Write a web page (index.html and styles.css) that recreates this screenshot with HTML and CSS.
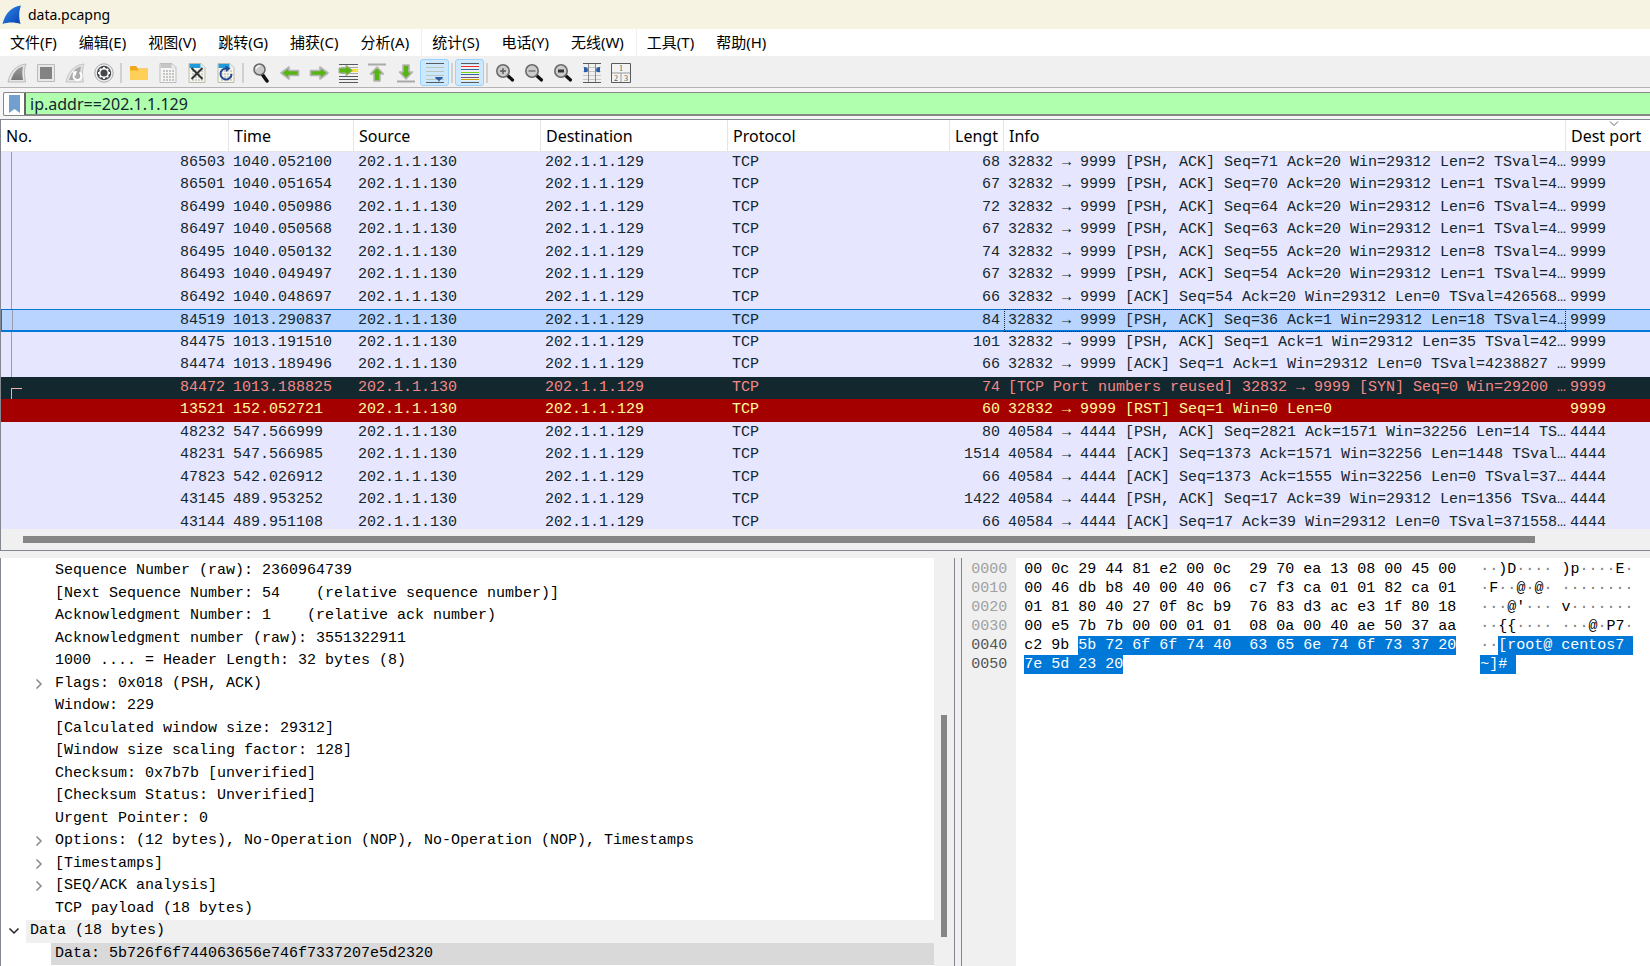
FILE: index.html
```
<!DOCTYPE html>
<html lang="zh-CN">
<head>
    <meta charset="UTF-8">
    <meta name="viewport" content="width=device-width, initial-scale=1.0">
    <title>data.pcapng</title>
    <link rel="stylesheet" href="styles.css">
</head>
<body>
    <header class="titlebar">
        <svg width="20" height="20" viewBox="0 0 20 20">
            <defs>
                <linearGradient id="fin" x1="0" y1="0" x2="1" y2="1">
                    <stop offset="0" stop-color="#2f8df0"/>
                    <stop offset="1" stop-color="#0a3fae"/>
                </linearGradient>
                <linearGradient id="grayfin" x1="0" y1="0" x2="0" y2="1">
                    <stop offset="0" stop-color="#9a9a9a"/>
                    <stop offset="1" stop-color="#777"/>
                </linearGradient>
            </defs>
            <path d="M.5 19C3 9 9 1.500 19 .5c-2 5-2.500 11-.5 18.500C13 17 6 17 .5 19z" fill="url(#fin)"/>
        </svg>
        <span>data.pcapng</span>
    </header>

    <nav class="menubar">
        <button type="button">文件(F)</button>
        <button type="button">编辑(E)</button>
        <button type="button">视图(V)</button>
        <button type="button">跳转(G)</button>
        <button type="button">捕获(C)</button>
        <button type="button">分析(A)</button>
        <button type="button" class="divided">统计(S)</button>
        <button type="button">电话(Y)</button>
        <button type="button">无线(W)</button>
        <button type="button" class="divided">工具(T)</button>
        <button type="button">帮助(H)</button>
    </nav>

    <div class="toolbar">
        <button type="button" aria-label="Start capture">
            <svg width="20" height="20" viewBox="0 0 20 20"><path d="M1 19C3 9 9 2 19 1c-2 5-2 11-.5 18z" fill="#e4e4e4" stroke="#bbb"/><path d="M4 17C6 10 10 5 16 3.500c-1 4-1 9 0 13.500z" fill="url(#grayfin)"/></svg>
        </button>
        <button type="button" aria-label="Stop capture">
            <svg width="20" height="20" viewBox="0 0 20 20"><path d="M1.500 1.500h17v17h-17z" fill="#e8e8e8" stroke="#bbb"/><path d="M4 4h12v12H4z" fill="#838383"/></svg>
        </button>
        <button type="button" aria-label="Restart capture">
            <svg width="20" height="20" viewBox="0 0 20 20"><path d="M1 19C3 9 9 2 19 1c-2 5-2 11-.5 18z" fill="#e4e4e4" stroke="#c4c4c4"/><path d="M4 17C6 10 10 5 16 3.500c-1 4-1 9 0 13.500z" fill="#aaa"/><path d="M14.500 9.500a4 4 0 1 1-5 .8" fill="none" stroke="#fff" stroke-width="2"/><path d="M7 8.500l5-.5-1.500 5z" fill="#fff"/></svg>
        </button>
        <button type="button" aria-label="Capture options">
            <svg width="20" height="20" viewBox="0 0 20 20"><circle cx="10" cy="10" r="9.200" fill="#eee" stroke="#a8a8a8"/><circle cx="10" cy="10" r="7.200" fill="#45494c"/><circle cx="10" cy="10" r="4.300" fill="none" stroke="#fff" stroke-width="1.500"/><path d="M10 4v2M10 14v2M4 10h2M14 10h2M5.800 5.800l1.400 1.400M12.800 12.800l1.400 1.400M5.800 14.200l1.400-1.400M12.800 7.200l1.400-1.400" stroke="#fff" stroke-width="1.800"/><circle cx="10" cy="10" r="2.400" fill="#45494c"/></svg>
        </button>
        <span class="sep"></span>
        <button type="button" aria-label="Open">
            <svg width="20" height="20" viewBox="0 0 20 20"><path d="M1 4q0-1 1-1h5l2 2.500h9q1 0 1 1V16q0 1-1 1H2q-1 0-1-1z" fill="#f0a91c"/><path d="M1 7.500h7.500l1.500-1.500h8.500q.5 0 .5.500V16q0 1-1 1H2q-1 0-1-1z" fill="#ffd057"/></svg>
        </button>
        <button type="button" aria-label="Save">
            <svg width="20" height="20" viewBox="0 0 20 20"><path d="M2 .5h12l4 4v15H2z" fill="#f5f5f3" stroke="#bdbdbd"/><path d="M2.500 1h11v4h-11z" fill="#c6c6c6"/><path d="M14 1v4h4z" fill="#fff" stroke="#bbb" stroke-width=".5"/><path d="M5 8h11M5 11h11M5 14h11M5 17h11" stroke="#c4c4c4" stroke-width="2" stroke-dasharray="2 1"/></svg>
        </button>
        <button type="button" aria-label="Close">
            <svg width="20" height="20" viewBox="0 0 20 20"><path d="M2 .5h12l4 4v15H2z" fill="#f5f5ec" stroke="#bcbcad"/><path d="M2.500 1h11v4h-11z" fill="#209bd8"/><path d="M14 1v4h4z" fill="#dcecf2"/><path d="M5 8h11M5 11h11M5 14h11M5 17h11" stroke="#d0d0c8" stroke-width="2" stroke-dasharray="2 1"/><path d="M4.500 5l11 11M15.500 5l-11 11" stroke="#2e3436" stroke-width="2"/></svg>
        </button>
        <button type="button" aria-label="Reload">
            <svg width="20" height="20" viewBox="0 0 20 20"><path d="M2 .5h12l4 4v15H2z" fill="#f5f5ec" stroke="#bcbcad"/><path d="M2.500 1h11v4h-11z" fill="#209bd8"/><path d="M14 1v4h4z" fill="#dcecf2"/><path d="M5 8h11M5 11h11M5 14h11M5 17h11" stroke="#d0d0c8" stroke-width="2" stroke-dasharray="2 1"/><path d="M15.500 11a5.500 5.500 0 1 1-5-5.500" fill="none" stroke="#244a94" stroke-width="2"/><path d="M9.500 2.500l5 3-4.500 3.500z" fill="#244a94"/></svg>
        </button>
        <span class="sep"></span>
        <button type="button" aria-label="Find packet">
            <svg width="20" height="20" viewBox="0 0 20 20"><path d="M11 11l5 7" stroke="#111" stroke-width="3.500" stroke-linecap="round"/><circle cx="8.500" cy="6.500" r="5.500" fill="#c9c9c9" stroke="#666" stroke-width="1.500"/><path d="M5 6q1-3 4-3" stroke="#f5f5f5" stroke-width="1.500" fill="none"/></svg>
        </button>
        <button type="button" aria-label="Previous packet">
            <svg width="20" height="20" viewBox="0 0 20 20"><path d="M1 10l8-6v3.500h9.500v5H9V16z" fill="#57b512" stroke="#b4b4b4" stroke-width="1.600" stroke-linejoin="round"/></svg>
        </button>
        <button type="button" aria-label="Next packet">
            <svg width="20" height="20" viewBox="0 0 20 20"><path d="M19 10l-8-6v3.500H1.500v5H11V16z" fill="#57b512" stroke="#b4b4b4" stroke-width="1.600" stroke-linejoin="round"/></svg>
        </button>
        <button type="button" aria-label="Go to packet">
            <svg width="20" height="20" viewBox="0 0 20 20"><path d="M1 1.500h19M1 13.500h19M1 16.500h19M1 19.500h19" stroke="#555b5e"/><path d="M3 4.500h17M3 10.500h17" stroke="#aaa"/><path d="M13 7.500h7" stroke="#fce03a" stroke-width="3"/><path d="M14.500 7.500L8 2v3H1v5h7v3z" fill="#57b512" stroke="#a8b0a0" stroke-linejoin="round"/></svg>
        </button>
        <button type="button" aria-label="First packet">
            <svg width="20" height="20" viewBox="0 0 20 20"><path d="M1 1.500h18" stroke="#aaa" stroke-width="2"/><path d="M10 4l6.500 7H13v7H7v-7H3.500z" fill="#57b512" stroke="#b4b4b4" stroke-width="1.600" stroke-linejoin="round"/></svg>
        </button>
        <button type="button" aria-label="Last packet">
            <svg width="20" height="20" viewBox="0 0 20 20"><path d="M1 18.500h18" stroke="#aaa" stroke-width="2"/><path d="M10 16L3.500 9H7V2h6v7h3.500z" fill="#57b512" stroke="#b4b4b4" stroke-width="1.600" stroke-linejoin="round"/></svg>
        </button>
        <button type="button" class="on" aria-label="Auto scroll">
            <svg width="20" height="20" viewBox="0 0 20 20"><path d="M1 .5h18M1 19.500h18" stroke="#555b5e"/><path d="M1 4.500h18M1 8.500h18M1 12.500h18M1 16.500h18" stroke="#bfc4bb"/><path d="M10 14h8q0 2-3 3l-1 2-1-2q-3-1-3-3z" fill="#2c5ea8"/></svg>
        </button>
        <span class="sep"></span>
        <button type="button" class="on" aria-label="Colorize">
            <svg width="20" height="20" viewBox="0 0 20 20"><path d="M1 2h18v16H1z" fill="#eef1f2"/><path d="M1 .5h18M1 19.500h18" stroke="#555b5e"/><path d="M1 3.500h18" stroke="#ef2929"/><path d="M1 6.500h18" stroke="#3465a4"/><path d="M1 9.500h18" stroke="#73d216"/><path d="M1 11.500h18" stroke="#3465a4"/><path d="M1 14.500h18" stroke="#75507b"/><path d="M1 16.500h18" stroke="#c4a000"/></svg>
        </button>
        <span class="sep"></span>
        <button type="button" aria-label="Zoom in">
            <svg width="20" height="20" viewBox="0 0 20 20"><path d="M12 12l5.500 5" stroke="#111" stroke-width="3.200" stroke-linecap="round"/><circle cx="8" cy="8" r="6.200" fill="#ccc" stroke="#6a6a6a" stroke-width="1.600"/><path d="M5 8h6M8 5v6" stroke="#555" stroke-width="1.300"/></svg>
        </button>
        <button type="button" aria-label="Zoom out">
            <svg width="20" height="20" viewBox="0 0 20 20"><path d="M12 12l5.500 5" stroke="#111" stroke-width="3.200" stroke-linecap="round"/><circle cx="8" cy="8" r="6.200" fill="#ccc" stroke="#6a6a6a" stroke-width="1.600"/><path d="M4.500 8h7" stroke="#666" stroke-width="1.300"/></svg>
        </button>
        <button type="button" aria-label="Normal size">
            <svg width="20" height="20" viewBox="0 0 20 20"><path d="M12 12l5.500 5" stroke="#111" stroke-width="3.200" stroke-linecap="round"/><circle cx="8" cy="8" r="6.200" fill="#ccc" stroke="#6a6a6a" stroke-width="1.600"/><path d="M5 8h6" stroke="#333" stroke-width="3"/></svg>
        </button>
        <button type="button" aria-label="Resize columns">
            <svg width="20" height="20" viewBox="0 0 20 20"><path d="M1 .5h18M1 19.500h18" stroke="#555b5e"/><path d="M1 4.500h18M1 8.500h18M1 12.500h18M1 16.500h18" stroke="#c6c9c2"/><path d="M6.500 1v18M13.500 1v18" stroke="#888"/><path d="M2 4q4 0 4 3t-4 2zM18 4q-4 0-4 3t4 2z" fill="#2c5ea8"/></svg>
        </button>
        <button type="button" aria-label="Layout">
            <svg width="20" height="20" viewBox="0 0 20 20"><path d="M.5.5h19v19H.5z" fill="#f3f3f3" stroke="#555b5e"/><path d="M1 10h18M10 10v9" stroke="#999"/><g font-family="Liberation Serif, serif" font-size="8" fill="#555" text-anchor="middle"><text x="10" y="8">1</text><text x="5" y="18">2</text><text x="15" y="18">3</text></g></svg>
        </button>
    </div>

    <div class="filterbar">
        <button type="button" class="bookmark" aria-label="Bookmarks">
            <svg width="11" height="18" viewBox="0 0 11 18"><path d="M0 0h11v18l-5.500-4L0 18z" fill="#729fcf"/></svg>
        </button>
        <input type="text" class="filter" aria-label="Display filter" value="ip.addr==202.1.1.129">
    </div>

    <section class="packets">
        <div class="packet-view">
            <table>
                <colgroup>
                    <col class="c-no">
                    <col class="c-time">
                    <col class="c-addr">
                    <col class="c-addr">
                    <col class="c-proto">
                    <col class="c-len">
                    <col>
                    <col class="c-port">
                </colgroup>
                <thead>
                    <tr><th>No.</th><th>Time</th><th>Source</th><th>Destination</th><th>Protocol</th><th>Lengt</th><th>Info</th><th class="sorted">Dest port<svg width="10" height="6" viewBox="0 0 10 6"><path d="M1 .5l4 4 4-4" fill="none" stroke="#666"/></svg></th></tr>
                </thead>
                <tbody>
                    <tr class="conv"><td>86503</td><td>1040.052100</td><td>202.1.1.130</td><td>202.1.1.129</td><td>TCP</td><td>68</td><td>32832 → 9999 [PSH, ACK] Seq=71 Ack=20 Win=29312 Len=2 TSval=4…</td><td>9999</td></tr>
                    <tr class="conv"><td>86501</td><td>1040.051654</td><td>202.1.1.130</td><td>202.1.1.129</td><td>TCP</td><td>67</td><td>32832 → 9999 [PSH, ACK] Seq=70 Ack=20 Win=29312 Len=1 TSval=4…</td><td>9999</td></tr>
                    <tr class="conv"><td>86499</td><td>1040.050986</td><td>202.1.1.130</td><td>202.1.1.129</td><td>TCP</td><td>72</td><td>32832 → 9999 [PSH, ACK] Seq=64 Ack=20 Win=29312 Len=6 TSval=4…</td><td>9999</td></tr>
                    <tr class="conv"><td>86497</td><td>1040.050568</td><td>202.1.1.130</td><td>202.1.1.129</td><td>TCP</td><td>67</td><td>32832 → 9999 [PSH, ACK] Seq=63 Ack=20 Win=29312 Len=1 TSval=4…</td><td>9999</td></tr>
                    <tr class="conv"><td>86495</td><td>1040.050132</td><td>202.1.1.130</td><td>202.1.1.129</td><td>TCP</td><td>74</td><td>32832 → 9999 [PSH, ACK] Seq=55 Ack=20 Win=29312 Len=8 TSval=4…</td><td>9999</td></tr>
                    <tr class="conv"><td>86493</td><td>1040.049497</td><td>202.1.1.130</td><td>202.1.1.129</td><td>TCP</td><td>67</td><td>32832 → 9999 [PSH, ACK] Seq=54 Ack=20 Win=29312 Len=1 TSval=4…</td><td>9999</td></tr>
                    <tr class="conv"><td>86492</td><td>1040.048697</td><td>202.1.1.130</td><td>202.1.1.129</td><td>TCP</td><td>66</td><td>32832 → 9999 [ACK] Seq=54 Ack=20 Win=29312 Len=0 TSval=426568…</td><td>9999</td></tr>
                    <tr class="conv selected"><td>84519</td><td>1013.290837</td><td>202.1.1.130</td><td>202.1.1.129</td><td>TCP</td><td>84</td><td class="focus">32832 → 9999 [PSH, ACK] Seq=36 Ack=1 Win=29312 Len=18 TSval=4…</td><td>9999</td></tr>
                    <tr class="conv"><td>84475</td><td>1013.191510</td><td>202.1.1.130</td><td>202.1.1.129</td><td>TCP</td><td>101</td><td>32832 → 9999 [PSH, ACK] Seq=1 Ack=1 Win=29312 Len=35 TSval=42…</td><td>9999</td></tr>
                    <tr class="conv"><td>84474</td><td>1013.189496</td><td>202.1.1.130</td><td>202.1.1.129</td><td>TCP</td><td>66</td><td>32832 → 9999 [ACK] Seq=1 Ack=1 Win=29312 Len=0 TSval=4238827 …</td><td>9999</td></tr>
                    <tr class="conv first bad"><td>84472</td><td>1013.188825</td><td>202.1.1.130</td><td>202.1.1.129</td><td>TCP</td><td>74</td><td>[TCP Port numbers reused] 32832 → 9999 [SYN] Seq=0 Win=29200 …</td><td>9999</td></tr>
                    <tr class="reset"><td>13521</td><td>152.052721</td><td>202.1.1.130</td><td>202.1.1.129</td><td>TCP</td><td>60</td><td>32832 → 9999 [RST] Seq=1 Win=0 Len=0</td><td>9999</td></tr>
                    <tr><td>48232</td><td>547.566999</td><td>202.1.1.130</td><td>202.1.1.129</td><td>TCP</td><td>80</td><td>40584 → 4444 [PSH, ACK] Seq=2821 Ack=1571 Win=32256 Len=14 TS…</td><td>4444</td></tr>
                    <tr><td>48231</td><td>547.566985</td><td>202.1.1.130</td><td>202.1.1.129</td><td>TCP</td><td>1514</td><td>40584 → 4444 [ACK] Seq=1373 Ack=1571 Win=32256 Len=1448 TSval…</td><td>4444</td></tr>
                    <tr><td>47823</td><td>542.026912</td><td>202.1.1.130</td><td>202.1.1.129</td><td>TCP</td><td>66</td><td>40584 → 4444 [ACK] Seq=1373 Ack=1555 Win=32256 Len=0 TSval=37…</td><td>4444</td></tr>
                    <tr><td>43145</td><td>489.953252</td><td>202.1.1.130</td><td>202.1.1.129</td><td>TCP</td><td>1422</td><td>40584 → 4444 [PSH, ACK] Seq=17 Ack=39 Win=29312 Len=1356 TSva…</td><td>4444</td></tr>
                    <tr><td>43144</td><td>489.951108</td><td>202.1.1.130</td><td>202.1.1.129</td><td>TCP</td><td>66</td><td>40584 → 4444 [ACK] Seq=17 Ack=39 Win=29312 Len=0 TSval=371558…</td><td>4444</td></tr>
                </tbody>
            </table>
        </div>
        <div class="hscroll"><div class="thumb"></div></div>
    </section>

    <main class="lower">
        <section class="details">
            <ul class="tree">
                <li><span class="exp"></span><span class="field">Sequence Number (raw): 2360964739</span></li>
                <li><span class="exp"></span><span class="field">[Next Sequence Number: 54    (relative sequence number)]</span></li>
                <li><span class="exp"></span><span class="field">Acknowledgment Number: 1    (relative ack number)</span></li>
                <li><span class="exp"></span><span class="field">Acknowledgment number (raw): 3551322911</span></li>
                <li><span class="exp"></span><span class="field">1000 .... = Header Length: 32 bytes (8)</span></li>
                <li><button type="button" class="exp" aria-label="Expand"><svg width="8" height="10" viewBox="0 0 8 10"><path d="M1.500 .5L6 5 1.500 9.500"/></svg></button><span class="field">Flags: 0x018 (PSH, ACK)</span></li>
                <li><span class="exp"></span><span class="field">Window: 229</span></li>
                <li><span class="exp"></span><span class="field">[Calculated window size: 29312]</span></li>
                <li><span class="exp"></span><span class="field">[Window size scaling factor: 128]</span></li>
                <li><span class="exp"></span><span class="field">Checksum: 0x7b7b [unverified]</span></li>
                <li><span class="exp"></span><span class="field">[Checksum Status: Unverified]</span></li>
                <li><span class="exp"></span><span class="field">Urgent Pointer: 0</span></li>
                <li><button type="button" class="exp" aria-label="Expand"><svg width="8" height="10" viewBox="0 0 8 10"><path d="M1.500 .5L6 5 1.500 9.500"/></svg></button><span class="field">Options: (12 bytes), No-Operation (NOP), No-Operation (NOP), Timestamps</span></li>
                <li><button type="button" class="exp" aria-label="Expand"><svg width="8" height="10" viewBox="0 0 8 10"><path d="M1.500 .5L6 5 1.500 9.500"/></svg></button><span class="field">[Timestamps]</span></li>
                <li><button type="button" class="exp" aria-label="Expand"><svg width="8" height="10" viewBox="0 0 8 10"><path d="M1.500 .5L6 5 1.500 9.500"/></svg></button><span class="field">[SEQ/ACK analysis]</span></li>
                <li><span class="exp"></span><span class="field">TCP payload (18 bytes)</span></li>
                <li class="proto"><button type="button" class="exp open" aria-label="Collapse"><svg width="12" height="8" viewBox="0 0 12 8"><path d="M1.500 1.500L6 6l4.500-4.500"/></svg></button><span class="field">Data (18 bytes)</span></li>
                <li class="current"><span class="exp"></span><span class="field">Data: 5b726f6f744063656e746f7337207e5d2320</span></li>
            </ul>
            <div class="vscroll"><div class="thumb"></div></div>
        </section>
        <section class="bytes">
<pre class="offsets">0000
0010
0020
0030
<b>0040
0050</b></pre>
<pre class="hex">00 0c 29 44 81 e2 00 0c  29 70 ea 13 08 00 45 00
00 46 db b8 40 00 40 06  c7 f3 ca 01 01 82 ca 01
01 81 80 40 27 0f 8c b9  76 83 d3 ac e3 1f 80 18
00 e5 7b 7b 00 00 01 01  08 0a 00 40 ae 50 37 aa
c2 9b <mark>5b 72 6f 6f 74 40  63 65 6e 74 6f 73 37 20</mark>
<mark>7e 5d 23 20</mark></pre>
<pre class="ascii"><i>··</i>)D<i>····</i> )p<i>····</i>E<i>·</i>
<i>·</i>F<i>··</i>@<i>·</i>@<i>·</i> <i>········</i>
<i>···</i>@'<i>···</i> v<i>·······</i>
<i>··</i>{{<i>····</i> <i>···</i>@<i>·</i>P7<i>·</i>
<i>··</i><mark>[root@ centos7 </mark>
<mark>~]# </mark></pre>
        </section>
    </main>
</body>
</html>
```
FILE: styles.css
```
* {
    box-sizing: border-box;
}
body {
    margin: 0;
    height: 100vh;
    display: flex;
    flex-direction: column;
    overflow: hidden;
    background: #f0f0f0;
    color: #000;
    font-family: "Noto Sans", "Noto Sans CJK SC", sans-serif;
    font-size: 16px;
}
button {
    border: none;
    padding: 0;
    background: none;
    font: inherit;
    color: inherit;
}
svg {
    display: block;
}

/* title, menu, toolbar */
.titlebar {
    flex: none;
    height: 29px;
    display: flex;
    align-items: center;
    gap: 6px;
    padding-left: 2px;
    background: #f7f3e3;
    font-size: 14px;
}
.menubar {
    flex: none;
    height: 27px;
    display: flex;
    background: #fff;
    font-size: 15px;
}
.menubar button {
    padding: 0 12px 2px 10px;
}
.menubar .divided {
    border-left: 1px solid #f0f0f0;
}
.toolbar {
    flex: none;
    height: 32px;
    display: flex;
    align-items: center;
    padding: 2px 0 0 2px;
    border-bottom: 1px solid #b4b4b4;
}
.toolbar button {
    width: 29px;
    height: 27px;
    display: flex;
    align-items: center;
    justify-content: center;
}
.toolbar .on {
    background: #cce8ff;
    border: 1px solid #99d1ff;
    border-radius: 3px;
}
.sep {
    width: 2px;
    height: 20px;
    margin: 0 2px;
    background: #d0d0d0;
}
.filterbar {
    flex: none;
    height: 31px;
    display: flex;
    padding: 4px 0 3px 3px;
    background: #f5f5f5;
}
.bookmark {
    width: 23px;
    display: flex;
    align-items: center;
    justify-content: center;
    background: #fff;
    border: 1px solid #868686;
    border-right: 2px solid #666;
    border-radius: 2px 0 0 2px;
}
.filter {
    flex: 1;
    min-width: 0;
    border: 1px solid #868686;
    border-width: 1px 0 2px;
    padding: 0 4px;
    background: #afffaf;
    font: inherit;
    color: #12272e;
    outline: none;
}

/* packet list */
.packets {
    flex: 20 1 0;
    min-height: 0;
    display: flex;
    flex-direction: column;
    border: 1px solid #828790;
    border-right: none;
    background: #fff;
}
.packet-view {
    flex: 1;
    min-height: 0;
    overflow: hidden;
}
table {
    width: 100%;
    table-layout: fixed;
    border-collapse: separate;
    border-spacing: 0;
}
.c-no { width: 228px; }
.c-time { width: 125px; }
.c-addr { width: 187px; }
.c-proto { width: 222px; }
.c-len { width: 54px; }
.c-port { width: 84px; }
th {
    height: 32px;
    padding: 0 5px;
    border-right: 1px solid #e5e5e5;
    border-bottom: 1px solid #e5e5e5;
    text-align: left;
    font-weight: normal;
    white-space: nowrap;
}
th:last-child {
    border-right: none;
}
.sorted {
    position: relative;
}
.sorted svg {
    position: absolute;
    top: 1px;
    left: 43px;
}
td {
    height: 22px;
    padding: 0 4px 2px;
    background: #e7e6ff;
    color: #12272e;
    font-family: "Liberation Mono", monospace;
    font-size: 15px;
    line-height: 19px;
    white-space: pre;
}
/* row pitch alternates 22 / 23 */
tr:nth-child(even) td {
    height: 23px;
}
td:nth-child(1),
td:nth-child(6) {
    text-align: right;
}
.conv td:first-child {
    position: relative;
}
.conv td:first-child::before {
    content: "";
    position: absolute;
    top: 0;
    bottom: 0;
    left: 10px;
    border-left: 1px solid #9a9db0;
}
.conv.first td:first-child::before {
    top: 11px;
    width: 10px;
    border-top: 1px solid #f7b0b0;
    border-left-color: #f7b0b0;
}
.selected td {
    padding-bottom: 0;
    background: #b8d4ff;
    border-top: 1px solid #0078d7;
    border-bottom: 2px solid #0078d7;
}
.selected td:first-child {
    border-left: 1px solid #0078d7;
}
.selected .focus {
    outline: 1px dotted #12272e;
    outline-offset: -1px;
}
.bad td {
    background: #12272e;
    color: #f78787;
}
.reset td {
    background: #a40000;
    color: #fffc9c;
}
.hscroll {
    flex: none;
    height: 21px;
    padding: 7px 115px 7px 22px;
    background: #f0f0f0;
}
.thumb {
    height: 100%;
    background: #868686;
}

/* details and bytes */
.lower {
    flex: 19 1 0;
    min-height: 0;
    margin-top: 7px;
    display: flex;
    gap: 6px;
    font-family: "Liberation Mono", monospace;
    font-size: 15px;
}
.details {
    flex: 955 1 0;
    min-width: 0;
    display: flex;
    border-left: 1px solid #828790;
    border-right: 1px solid #828790;
    background: #fff;
}
.tree {
    flex: 1;
    min-width: 0;
    margin: 0;
    padding: 2px 0 0;
    overflow: hidden;
    list-style: none;
}
.tree li {
    height: 23px;
    display: flex;
    padding-left: 25px;
    line-height: 22px;
    white-space: pre;
}
.tree li:nth-child(even) {
    height: 22px;
}
.tree .proto {
    padding-left: 0;
}
.exp {
    flex: none;
    width: 25px;
    display: flex;
    align-items: center;
    justify-content: center;
}
.exp path {
    fill: none;
    stroke: #8a8a8a;
    stroke-width: 1.5px;
}
.exp.open path {
    stroke: #222;
}
.field {
    flex: 1;
    padding-left: 4px;
}
.proto .field {
    background: #f0f0f0;
}
.current .field {
    background: #d9d9d9;
}
.vscroll {
    flex: none;
    width: 20px;
    padding: 157px 7px 29px;
    background: #f0f0f0;
}
.bytes {
    flex: 689 1 0;
    min-width: 0;
    display: flex;
    border-left: 1px solid #828790;
    background: #fff;
    overflow: hidden;
}
pre {
    margin: 0;
    padding-top: 2px;
    font: inherit;
    line-height: 19px;
}
.offsets {
    width: 54px;
    padding-left: 9px;
    background: #f0f0f0;
    color: #a0a0a0;
}
.offsets b {
    font-weight: normal;
    color: #555;
}
.hex {
    padding-left: 8px;
    padding-right: 24px;
}
mark {
    display: inline-block;
    height: 19px;
    vertical-align: top;
    background: #0078d7;
    color: #fff;
}
.ascii i {
    font-style: normal;
    color: #808080;
}
```
